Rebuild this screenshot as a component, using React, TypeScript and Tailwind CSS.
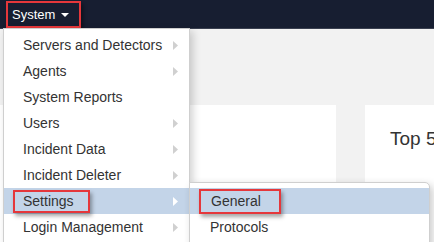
import React from "react";

const Caret = ({ color = "#cfcfcf" }: { color?: string }) => (
  <svg width="5" height="9" viewBox="0 0 5 9" className="shrink-0">
    <path d="M0 0 L5 4.5 L0 9 Z" fill={color} />
  </svg>
);

const items: { label: string; arrow: boolean; active?: boolean }[] = [
  { label: "Servers and Detectors", arrow: true },
  { label: "Agents", arrow: true },
  { label: "System Reports", arrow: false },
  { label: "Users", arrow: true },
  { label: "Incident Data", arrow: true },
  { label: "Incident Deleter", arrow: true },
  { label: "Settings", arrow: true, active: true },
  { label: "Login Management", arrow: true },
];

export default function App() {
  return (
    <div className="relative w-[434px] h-[242px] overflow-hidden bg-[#f2f2f2] font-['Liberation_Sans',Arial,sans-serif]">
      <nav className="h-[29px] bg-[#171e31] border-b border-[#3a4050] flex items-start">
        <div className="ml-[6px] mt-[1px] h-[27px] border-2 border-[#e5373b] shadow-[2px_3px_4px_rgba(0,0,0,0.45)] flex items-center pl-[4px] pr-[10px] gap-[6px] text-white text-[13px]">
          <span>System</span>
          <svg width="8" height="4" viewBox="0 0 8 4">
            <path d="M0 0 L8 0 L4 4 Z" fill="#ffffff" />
          </svg>
        </div>
      </nav>

      <main className="flex gap-[29px] pt-[76px]">
        <div className="w-[336px] h-[160px] bg-white shrink-0" />
        <div className="flex-1 min-w-0 h-[160px] bg-white pt-[20px] pl-[25px] text-[19px] text-[#333] whitespace-nowrap overflow-hidden">
          Top 5
        </div>
      </main>

      {/* Main dropdown */}
      <div className="absolute left-[3px] top-[28px] w-[187px] h-[240px] bg-white border border-[#cfcfcf] shadow-[3px_3px_8px_rgba(0,0,0,0.18)] pt-[3px]">
        {items.map((it) => (
          <div
            key={it.label}
            className={`h-[26px] flex items-center justify-between pl-[19px] pr-[11px] text-[14px] text-[#333] ${
              it.active ? "bg-[#c3d4e8]" : ""
            }`}
          >
            {it.active ? (
              <span className="-ml-[10px] h-[23px] w-[77px] border-2 border-[#e5373b] shadow-[2px_3px_4px_rgba(0,0,0,0.35)] flex items-center pl-[8px]">
                {it.label}
              </span>
            ) : (
              <span>{it.label}</span>
            )}
            {it.arrow ? <Caret color={it.active ? "#ffffff" : "#d0d0d0"} /> : <span />}
          </div>
        ))}
      </div>

      {/* Submenu */}
      <div className="absolute left-[189px] top-[182px] w-[241px] h-[80px] bg-white border border-[#cfcfcf] rounded-tr-[5px] shadow-[3px_3px_8px_rgba(0,0,0,0.2)] pt-[5px]">
        <div className="h-[26px] bg-[#c3d4e8] flex items-center pl-[9px] text-[14px] text-[#333]">
          <span className="h-[25px] w-[82px] border-2 border-[#e5373b] shadow-[2px_3px_4px_rgba(0,0,0,0.35)] flex items-center pl-[10px] mt-[1px]">
            General
          </span>
        </div>
        <div className="h-[26px] flex items-center pl-[20px] text-[14px] text-[#333]">Protocols</div>
      </div>
    </div>
  );
}
